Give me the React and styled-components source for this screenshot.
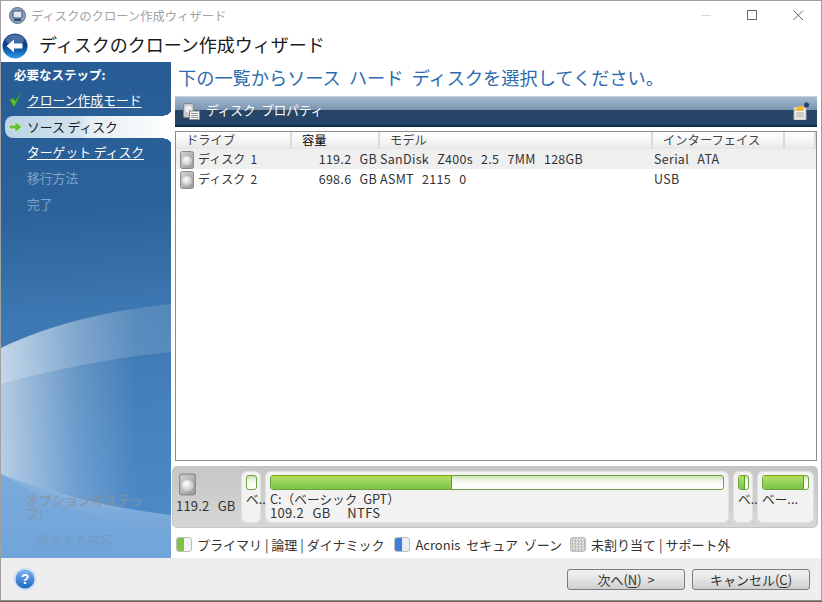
import React from 'react';
import styled, { createGlobalStyle } from 'styled-components';

const FONT = '"Noto Sans CJK JP", "Noto Sans", sans-serif';

const Global = createGlobalStyle`
  html, body { margin: 0; padding: 0; background: #6b6252; }
  body { font-family: ${FONT}; width: 822px; height: 602px; overflow: hidden; }
  * { box-sizing: border-box; }
`;

const Win = styled.div`
  width: 822px;
  height: 601px;
  border: 1px solid #a0a0a0;
  border-bottom: 1px solid #8a8a8a;
  background: #fff;
  display: flex;
  flex-direction: column;
`;
const TitleBar = styled.div`
  height: 29px;
  flex: none;
  display: flex;
  align-items: center;
  padding-left: 8px;
`;
const TitleText = styled.div`
  font-size: 12.3px;
  color: #a3a3a3;
  flex: 1;
  margin-left: 5px;
  white-space: pre;
`;
const WinBtn = styled.div`
  width: 46px;
  height: 29px;
  display: flex;
  align-items: center;
  justify-content: center;
`;
const Header = styled.div`
  height: 32px;
  flex: none;
  display: flex;
  align-items: center;
  padding-left: 1px;
  gap: 11px;
`;
const HeaderTitle = styled.div`
  font-size: 18px;
  color: #1a1a1a;
  white-space: pre;
  margin-top: -4px;
`;
const Main = styled.div`
  flex: 1;
  display: flex;
  min-height: 0;
`;
const Side = styled.div`
  width: 170px;
  flex: none;
  position: relative;
  overflow: hidden;
  background: linear-gradient(176deg, #275c94 0%, #2b6299 30%, #3d77b1 50%, #4683c0 75%, #4f8cca 100%);
  color: #fff;
  display: flex;
  flex-direction: column;
`;
const Swoosh = styled.svg`
  position: absolute;
  left: 0;
  top: 0;
`;
const SideHead = styled.div`
  position: relative;
  font-size: 12.5px;
  font-weight: 700;
  height: 26px;
  padding: 3px 0 0 13px;
  white-space: pre;
`;
const Step = styled.div`
  position: relative;
  height: 26px;
  flex: none;
  display: flex;
  align-items: center;
  padding: 0 0 3px 26px;
  font-size: 12.8px;
  white-space: pre;
  color: ${(p) => (p.$off ? '#7fa3c8' : '#fff')};
  text-decoration: ${(p) => (p.$link ? 'underline' : 'none')};
  text-underline-offset: 2px;
`;
const ActiveStep = styled(Step)`
  height: 22px;
  margin: 2px 0 2px 4px;
  padding: 0 0 1px 22px;
  border-radius: 8px 0 0 8px;
  color: #1c1c1c;
  word-spacing: -1.5px;
  background: linear-gradient(90deg, #b9d3e5 0%, #d3e3ee 45%, #e4eef4 50%, #fff 100%);
  &::before, &::after {
    content: '';
    position: absolute;
    right: 0;
    width: 11px;
    height: 5px;
  }
  &::before {
    top: -5px;
    background: radial-gradient(ellipse 11px 5px at 0 0, transparent 97%, #fff 100%);
  }
  &::after {
    bottom: -5px;
    background: radial-gradient(ellipse 11px 5px at 0 100%, transparent 97%, #fff 100%);
  }
`;
const StepIcon = styled.svg`
  position: absolute;
  left: ${(p) => p.$left}px;
  top: 50%;
  transform: translateY(-50%);
`;
const Optional = styled.div`
  position: absolute;
  left: 25px;
  top: 431px;
  width: 122px;
  font-size: 13px;
  font-weight: 700;
  line-height: 13px;
  color: rgba(140, 145, 150, 0.62);
`;
const Excluded = styled.div`
  position: absolute;
  left: 36px;
  top: 468px;
  font-size: 12.6px;
  color: rgba(110, 135, 160, 0.36);
`;
const Content = styled.div`
  flex: 1;
  min-width: 0;
  padding: 4px 4px 0 4px;
  display: flex;
  flex-direction: column;
`;
const Lead = styled.div`
  height: 30px;
  font-size: 18.2px;
  line-height: 23px;
  color: #2c6bb0;
  padding-left: 3px;
  white-space: pre;
`;
const PropBar = styled.div`
  height: 31px;
  flex: none;
  border-top: 1px solid #c8d2dc;
  border-bottom: 2px solid #0f2e4d;
  background: linear-gradient(180deg, #a3b9d2 0%, #7d95ae 45%, #264566 46%, #25446a 100%);
  display: flex;
  align-items: center;
  padding: 0 8px;
  gap: 6px;
  color: #fff;
  font-size: 12.6px;
  white-space: pre;
`;
const PropLabel = styled.span`
  flex: 1;
  margin-top: -3px;
`;
const Table = styled.div`
  margin-top: 4px;
  height: 330px;
  flex: none;
  border: 1px solid #8c8c8c;
  background: #fff;
`;
const Row = styled.div`
  display: grid;
  grid-template-columns: 116px 88px 273px 132px 1fr;
  height: ${(p) => (p.$head ? '17px' : '20px')};
  background: ${(p) =>
    p.$head ? 'linear-gradient(180deg, #fff 0%, #f3f3f3 60%, #e6e6e6 100%)' : p.$zebra ? '#efefef' : '#fff'};
  font-size: 12.5px;
  letter-spacing: 0.3px;
  word-spacing: 1px;
  color: #333;
  white-space: pre;
`;
const HeadCell = styled.div`
  border-right: 2px solid #dcdcdc;
  padding-left: ${(p) => p.$pad}px;
  font-size: 12.3px;
  letter-spacing: 0;
  line-height: 17px;
  color: ${(p) => (p.$dark ? '#000' : '#444')};
`;
const Cell = styled.div`
  display: flex;
  align-items: center;
  gap: 4px;
  padding-bottom: 3px;
  padding-left: ${(p) => p.$pad || 0}px;
  justify-content: ${(p) => (p.$right ? 'flex-end' : 'flex-start')};
  padding-right: ${(p) => (p.$right ? '3px' : 0)};
`;
const DriveCell = styled(Cell)`
  font-size: 12px;
  letter-spacing: 0;
  word-spacing: 0;
  padding-bottom: 0;
`;
const DriveName = styled.span`
  margin-top: -3px;
`;
const Disks = styled.div`
  margin-top: 5px;
  height: 62px;
  flex: none;
  margin-left: -3px;
  margin-right: -1px;
  border: 1px solid #c4c4c4;
  border-radius: 5px;
  background: linear-gradient(180deg, #c6c6c6 0%, #d6d6d6 100%);
  display: flex;
  padding: 4px 3px 4px 0;
  font-size: 12.7px;
  color: #333;
  white-space: pre;
`;
const DiskInfo = styled.div`
  width: 64px;
  flex: none;
  padding: 2px 0 0 3px;
  line-height: 15px;
  font-size: 13px;
  letter-spacing: 0.2px;
  word-spacing: 1px;
`;
const DiskPic = styled.div`
  padding-left: 3px;
  height: 25px;
`;
const Part = styled.div`
  width: ${(p) => p.$w}px;
  flex: ${(p) => (p.$grow ? 1 : 'none')};
  min-width: 0;
  margin-left: 4px;
  border: 1px solid #e2e2e2;
  border-radius: 6px;
  background: #f2f2f2;
  padding: 3px 4px;
  line-height: 14px;
`;
const Bar = styled.div`
  height: 15px;
  width: ${(p) => (p.$w ? `${p.$w}px` : 'auto')};
  border: 1px solid #6fa042;
  border-radius: 3px;
  overflow: hidden;
  background: linear-gradient(180deg, #cfe3b6 0%, #f6faf0 45%, #fff 100%);
  margin-bottom: 2px;
`;
const Fill = styled.div`
  height: 100%;
  background: linear-gradient(180deg, #c4e000 0%, #a8dc6c 15%, #7cc444 100%);
  border-right: 1px solid #5e9a34;
`;
const SizeLine = styled.div`
  font-size: 13px;
  letter-spacing: 0.3px;
  word-spacing: 1px;
`;
const Legend = styled.div`
  height: 30px;
  flex: none;
  display: flex;
  align-items: center;
  padding: 3px 0 0 1px;
  font-size: 13px;
  color: #333;
  white-space: pre;
`;
const Swatch = styled.div`
  width: 16px;
  height: 15px;
  border: 1px solid #bdbdbd;
  border-radius: 3px;
  margin-right: 5px;
  margin-left: ${(p) => p.$ml || 0}px;
  background: ${(p) => p.$bg};
`;
const Footer = styled.div`
  height: 42px;
  flex: none;
  background: #eeeeee;
  display: flex;
  align-items: center;
  padding: 0 11px 0 12px;
`;
const Spacer = styled.div`
  flex: 1;
`;
const Btn = styled.div`
  width: 118px;
  height: 21px;
  margin-left: 7px;
  border: 1px solid #7c7c7c;
  border-radius: 3px;
  background: linear-gradient(180deg, #f2f2f2 0%, #e4e4e4 50%, #cfcfcf 100%);
  font-size: 13px;
  color: #333;
  display: flex;
  align-items: center;
  justify-content: center;
  white-space: pre;
  u { text-underline-offset: 2px; }
`;

const DiskIcon = ({ s = 14, h = 18 }) => (
  <svg width={s} height={h} viewBox="0 0 14 18">
    <defs>
      <linearGradient id="dg" x1="0" y1="0" x2="1" y2="1">
        <stop offset="0" stopColor="#d4d4d4" />
        <stop offset="1" stopColor="#979797" />
      </linearGradient>
      <radialGradient id="dp" cx="0.4" cy="0.35" r="0.7">
        <stop offset="0" stopColor="#fff" />
        <stop offset="1" stopColor="#bcbcbc" />
      </radialGradient>
    </defs>
    <rect x="0.5" y="0.5" width="13" height="17" rx="2" fill="url(#dg)" stroke="#8a8a8a" />
    <circle cx="7" cy="10" r="5" fill="url(#dp)" />
  </svg>
);

const BackIcon = () => (
  <svg width="26" height="26" viewBox="0 0 26 26">
    <defs>
      <linearGradient id="bk" x1="0" y1="0" x2="0" y2="1">
        <stop offset="0" stopColor="#2a4f8c" />
        <stop offset="0.5" stopColor="#0a3f8e" />
        <stop offset="1" stopColor="#2aa0e8" />
      </linearGradient>
    </defs>
    <circle cx="13" cy="13" r="12.5" fill="url(#bk)" />
    <ellipse cx="13" cy="7" rx="9" ry="5" fill="#fff" opacity="0.2" />
    <path d="M4.5 13 L12 6.5 V10.5 H20.5 V15.5 H12 V19.5 Z" fill="#fff" />
  </svg>
);

const AppIcon = () => (
  <svg width="17" height="17" viewBox="0 0 17 17">
    <circle cx="8.5" cy="8.5" r="8" fill="#8da2bb" stroke="#5d7088" />
    <rect x="4" y="4" width="9" height="7" rx="1" fill="#dfe8f2" stroke="#2f4a6b" />
    <rect x="5" y="12" width="7" height="2" fill="#2f4a6b" />
  </svg>
);

const HelpIcon = () => (
  <svg width="24" height="24" viewBox="0 0 24 24">
    <defs>
      <linearGradient id="hp" x1="0" y1="0" x2="0" y2="1">
        <stop offset="0" stopColor="#7fb4ee" />
        <stop offset="1" stopColor="#1e66c4" />
      </linearGradient>
    </defs>
    <circle cx="12" cy="12" r="11.5" fill="#cfe0f6" />
    <circle cx="12" cy="12" r="9.5" fill="url(#hp)" />
    <text x="12" y="17" fontSize="14" fontWeight="700" textAnchor="middle" fill="#fff" fontFamily="Liberation Sans">?</text>
  </svg>
);

const PropIcon = () => (
  <svg width="17" height="17" viewBox="0 0 17 17">
    <rect x="0.5" y="0.5" width="10" height="14" rx="1.5" fill="#c9c9c9" stroke="#888" />
    <circle cx="5.5" cy="6" r="3.5" fill="#eee" />
    <rect x="6.5" y="8" width="10" height="8.5" fill="#f4f4f4" stroke="#888" />
    <path d="M8 10.5h7M8 12.5h7M8 14.5h7" stroke="#999" />
  </svg>
);

const NoteIcon = () => (
  <svg width="16" height="18" viewBox="0 0 16 18">
    <rect x="1" y="5" width="12" height="13" fill="#f6f4ea" stroke="#a8a8a8" />
    <path d="M3 11h8M3 13h8M3 15h8" stroke="#aaa" />
    <path d="M1.5 9 C3 5 7 3 12 4 L10 9 Z" fill="#f2b93a" />
    <circle cx="13.5" cy="3" r="2.5" fill="#1f3f78" />
  </svg>
);

const SideArt = () => (
  <Swoosh width="170" height="496" viewBox="0 0 170 496">
    <defs>
      <linearGradient id="lens" x1="0" y1="0" x2="1" y2="0">
        <stop offset="0" stopColor="#fff" stopOpacity="0.6" />
        <stop offset="0.45" stopColor="#fff" stopOpacity="0.2" />
        <stop offset="0.8" stopColor="#fff" stopOpacity="0" />
      </linearGradient>
      <linearGradient id="rim" x1="0" y1="0" x2="1" y2="0">
        <stop offset="0" stopColor="#fff" stopOpacity="0.22" />
        <stop offset="1" stopColor="#fff" stopOpacity="0.12" />
      </linearGradient>
      <linearGradient id="low" x1="0" y1="0" x2="0" y2="1">
        <stop offset="0" stopColor="#a9c8e8" />
        <stop offset="1" stopColor="#74a7dc" />
      </linearGradient>
    </defs>
    <path d="M0 286 C50 262 110 248 170 242 V290 C110 296 50 308 0 322 Z" fill="url(#rim)" />
    <path d="M0 286 C50 262 110 248 170 242 V460 C110 448 50 432 0 412 Z" fill="url(#lens)" />
    <path d="M0 412 C50 432 110 446 170 453 V496 H0 Z" fill="url(#low)" opacity="0.7" />
    <path d="M0 412 C50 442 110 462 170 475 V496 H0 Z" fill="#74a7dc" opacity="0.7" />
  </Swoosh>
);

const Sw1 = 'linear-gradient(90deg, #7cc444 0 50%, #f4f4f4 50% 100%)';
const Sw2 = 'linear-gradient(90deg, #3f7fd6 0 50%, #e8eef6 50% 100%)';
const Sw3 = 'repeating-conic-gradient(#bdbdbd 0 25%, #e6e6e6 0 50%) 0 0 / 3px 3px';

export default function App() {
  return (
    <>
      <Global />
      <Win>
        <TitleBar>
          <AppIcon />
          <TitleText>ディスクのクローン作成ウィザード</TitleText>
          <WinBtn>
            <svg width="11" height="11"><path d="M0 5.5h10" stroke="#d8d8d8" /></svg>
          </WinBtn>
          <WinBtn>
            <svg width="11" height="11"><rect x="0.5" y="0.5" width="9" height="9" fill="none" stroke="#666" /></svg>
          </WinBtn>
          <WinBtn>
            <svg width="11" height="11"><path d="M0.5 0.5l9.5 9.5M10 0.5l-9.5 9.5" stroke="#666" /></svg>
          </WinBtn>
        </TitleBar>
        <Header>
          <BackIcon />
          <HeaderTitle>ディスクのクローン作成ウィザード</HeaderTitle>
        </Header>
        <Main>
          <Side>
            <SideArt />
            <SideHead>必要なステップ:</SideHead>
            <Step $link>
              <StepIcon $left={8} width="13" height="14" viewBox="0 0 13 14">
                <path d="M1 6 L5 13 L12 0 L6 7 L4 4 Z" fill="#56c12b" stroke="#3a8d1a" strokeWidth="0.6" />
              </StepIcon>
              クローン作成モード
            </Step>
            <ActiveStep>
              <StepIcon $left={3} width="15" height="14" viewBox="0 0 15 14">
                <path d="M1 5 H7 V1 L14 7 L7 13 V9 H1 Z" fill="#67c23a" stroke="#e8f4d8" strokeWidth="0.8" />
              </StepIcon>
              ソース  ディスク
            </ActiveStep>
            <Step $link>ターゲット ディスク</Step>
            <Step $off>移行方法</Step>
            <Step $off>完了</Step>
            <Optional>オプションのステップ:</Optional>
            <Excluded>除外する内容</Excluded>
          </Side>
          <Content>
            <Lead>下の一覧からソース  ハード  ディスクを選択してください。</Lead>
            <PropBar>
              <PropIcon />
              <PropLabel>ディスク  プロパティ</PropLabel>
              <NoteIcon />
            </PropBar>
            <Table>
              <Row $head>
                <HeadCell $pad={10}>ドライブ</HeadCell>
                <HeadCell $pad={10} $dark>容量</HeadCell>
                <HeadCell $pad={10}>モデル</HeadCell>
                <HeadCell $pad={10}>インターフェイス</HeadCell>
                <HeadCell $pad={0} />
              </Row>
              <Row $zebra>
                <DriveCell $pad={4}><DiskIcon /><DriveName>ディスク  1</DriveName></DriveCell>
                <Cell $right>119.2  GB</Cell>
                <Cell>SanDisk  Z400s  2.5  7MM  128GB</Cell>
                <Cell $pad={1}>Serial  ATA</Cell>
                <Cell />
              </Row>
              <Row>
                <DriveCell $pad={4}><DiskIcon /><DriveName>ディスク  2</DriveName></DriveCell>
                <Cell $right>698.6  GB</Cell>
                <Cell>ASMT  2115  0</Cell>
                <Cell $pad={1}>USB</Cell>
                <Cell />
              </Row>
            </Table>
            <Disks>
              <DiskInfo>
                <DiskPic><DiskIcon s={17} h={23} /></DiskPic>
                <div>119.2  GB</div>
              </DiskInfo>
              <Part $w={20}>
                <Bar $w={11} />
                ベ..
              </Part>
              <Part $grow>
                <Bar><Fill style={{ width: '40%' }} /></Bar>
                <div>C:（ベーシック  GPT）</div>
                <SizeLine>109.2  GB    NTFS</SizeLine>
              </Part>
              <Part $w={20}>
                <Bar $w={11}><Fill style={{ width: '70%' }} /></Bar>
                ベ..
              </Part>
              <Part $w={57}>
                <Bar><Fill style={{ width: '92%' }} /></Bar>
                ベー...
              </Part>
            </Disks>
            <Legend>
              <Swatch $bg={Sw1} />プライマリ | 論理 | ダイナミック
              <Swatch $ml={10} $bg={Sw2} />Acronis  セキュア  ゾーン
              <Swatch $ml={8} $bg={Sw3} />未割り当て | サポート外
            </Legend>
          </Content>
        </Main>
        <Footer>
          <HelpIcon />
          <Spacer />
          <Btn>次へ(<u>N</u>)  &gt;</Btn>
          <Btn>キャンセル(<u>C</u>)</Btn>
        </Footer>
      </Win>
    </>
  );
}
